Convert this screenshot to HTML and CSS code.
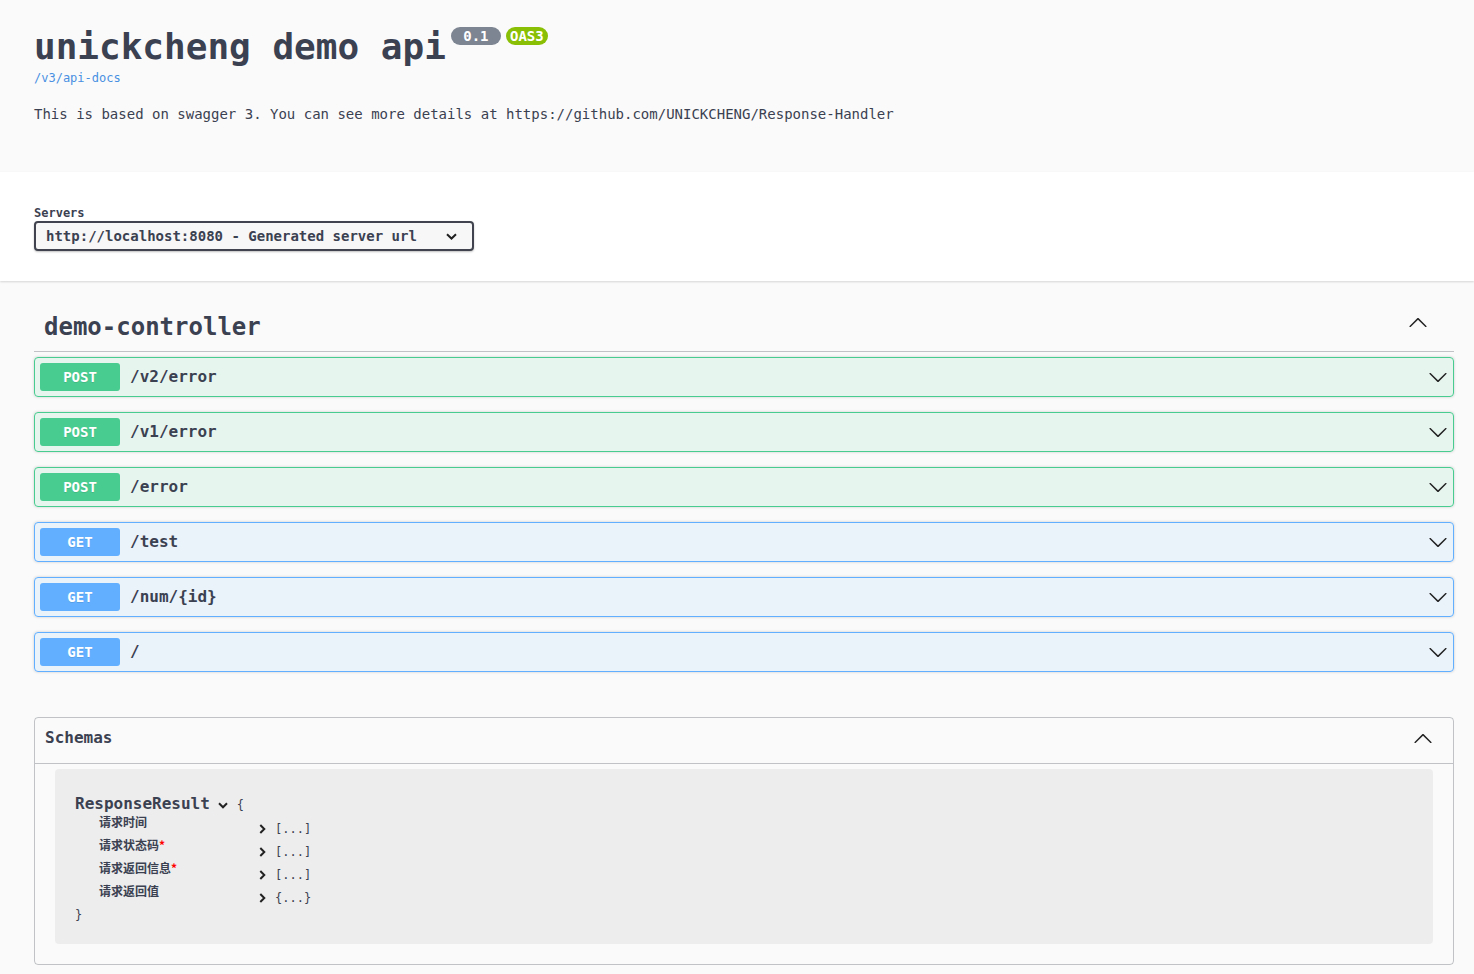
FILE: index.html
```html
<!DOCTYPE html>
<html lang="en">
<head>
<meta charset="utf-8">
<title>unickcheng demo api</title>
<link rel="stylesheet" href="styles.css">
</head>
<body>
<div class="wrap">
  <div class="info">
    <h2 class="title">unickcheng demo api<span class="badges"><span class="badge version"> 0.1 </span><span class="badge oas">OAS3</span></span></h2>
    <a class="url" href="#">/v3/api-docs</a>
    <p class="desc">This is based on swagger 3. You can see more details at https://github.com/UNICKCHENG/Response-Handler</p>
  </div>
</div>

<div class="schemes">
  <div class="wrap">
    <div class="schemes-title">Servers</div>
    <div class="select">
      <span>http://localhost:8080 - Generated server url</span>
      <svg class="select-arrow" width="11" height="7" viewBox="0 0 11 7"><path d="M1 1.2 L5.5 5.5 L10 1.2" fill="none" stroke="#202020" stroke-width="2"/></svg>
    </div>
  </div>
</div>

<div class="wrap">
  <div class="tag-section">
    <div class="tag">
      <h3>demo-controller</h3>
      <svg class="arrow" width="20" height="20" viewBox="0 0 20 20"><path transform="rotate(180 10 10)" d="M17.418 6.109c.272-.268.709-.268.979 0s.271.701 0 .969l-7.908 7.83c-.27.268-.707.268-.979 0l-7.908-7.83c-.27-.268-.27-.701 0-.969.271-.268.709-.268.979 0L10 13.25l7.418-7.141z"/></svg>
    </div>

    <div class="opblock post">
      <div class="summary"><span class="method">POST</span><span class="path">/v2/error</span>
        <svg class="arrow" width="20" height="20" viewBox="0 0 20 20"><path d="M17.418 6.109c.272-.268.709-.268.979 0s.271.701 0 .969l-7.908 7.83c-.27.268-.707.268-.979 0l-7.908-7.83c-.27-.268-.27-.701 0-.969.271-.268.709-.268.979 0L10 13.25l7.418-7.141z"/></svg>
      </div>
    </div>
    <div class="opblock post">
      <div class="summary"><span class="method">POST</span><span class="path">/v1/error</span>
        <svg class="arrow" width="20" height="20" viewBox="0 0 20 20"><path d="M17.418 6.109c.272-.268.709-.268.979 0s.271.701 0 .969l-7.908 7.83c-.27.268-.707.268-.979 0l-7.908-7.83c-.27-.268-.27-.701 0-.969.271-.268.709-.268.979 0L10 13.25l7.418-7.141z"/></svg>
      </div>
    </div>
    <div class="opblock post">
      <div class="summary"><span class="method">POST</span><span class="path">/error</span>
        <svg class="arrow" width="20" height="20" viewBox="0 0 20 20"><path d="M17.418 6.109c.272-.268.709-.268.979 0s.271.701 0 .969l-7.908 7.83c-.27.268-.707.268-.979 0l-7.908-7.83c-.27-.268-.27-.701 0-.969.271-.268.709-.268.979 0L10 13.25l7.418-7.141z"/></svg>
      </div>
    </div>
    <div class="opblock get">
      <div class="summary"><span class="method">GET</span><span class="path">/test</span>
        <svg class="arrow" width="20" height="20" viewBox="0 0 20 20"><path d="M17.418 6.109c.272-.268.709-.268.979 0s.271.701 0 .969l-7.908 7.83c-.27.268-.707.268-.979 0l-7.908-7.83c-.27-.268-.27-.701 0-.969.271-.268.709-.268.979 0L10 13.25l7.418-7.141z"/></svg>
      </div>
    </div>
    <div class="opblock get">
      <div class="summary"><span class="method">GET</span><span class="path">/num/{id}</span>
        <svg class="arrow" width="20" height="20" viewBox="0 0 20 20"><path d="M17.418 6.109c.272-.268.709-.268.979 0s.271.701 0 .969l-7.908 7.83c-.27.268-.707.268-.979 0l-7.908-7.83c-.27-.268-.27-.701 0-.969.271-.268.709-.268.979 0L10 13.25l7.418-7.141z"/></svg>
      </div>
    </div>
    <div class="opblock get">
      <div class="summary"><span class="method">GET</span><span class="path">/</span>
        <svg class="arrow" width="20" height="20" viewBox="0 0 20 20"><path d="M17.418 6.109c.272-.268.709-.268.979 0s.271.701 0 .969l-7.908 7.83c-.27.268-.707.268-.979 0l-7.908-7.83c-.27-.268-.27-.701 0-.969.271-.268.709-.268.979 0L10 13.25l7.418-7.141z"/></svg>
      </div>
    </div>
  </div>

  <section class="models">
    <div class="models-head">
      <h4>Schemas</h4>
      <svg class="arrow models-arrow" width="20" height="20" viewBox="0 0 20 20"><path transform="rotate(180 10 10)" d="M17.418 6.109c.272-.268.709-.268.979 0s.271.701 0 .969l-7.908 7.83c-.27.268-.707.268-.979 0l-7.908-7.83c-.27-.268-.27-.701 0-.969.271-.268.709-.268.979 0L10 13.25l7.418-7.141z"/></svg>
    </div>
    <div class="model-container">
      <div class="model-title"><span class="model-name">ResponseResult</span><svg class="toggle-down" width="10" height="7" viewBox="0 0 10 7"><path d="M1 1.3 L5 5.3 L9 1.3" fill="none" stroke="#222" stroke-width="2"/></svg><span class="brace">{</span></div>
      <div class="prop-row">
        <div class="prop-name">请求时间</div>
        <div class="prop-val"><svg class="toggle-right" width="7" height="10" viewBox="0 0 7 10"><path d="M1.3 1 L5.3 5 L1.3 9" fill="none" stroke="#222" stroke-width="2"/></svg><span class="collapsed">[...]</span></div>
      </div>
      <div class="prop-row">
        <div class="prop-name">请求状态码<span class="star">*</span></div>
        <div class="prop-val"><svg class="toggle-right" width="7" height="10" viewBox="0 0 7 10"><path d="M1.3 1 L5.3 5 L1.3 9" fill="none" stroke="#222" stroke-width="2"/></svg><span class="collapsed">[...]</span></div>
      </div>
      <div class="prop-row">
        <div class="prop-name">请求返回信息<span class="star">*</span></div>
        <div class="prop-val"><svg class="toggle-right" width="7" height="10" viewBox="0 0 7 10"><path d="M1.3 1 L5.3 5 L1.3 9" fill="none" stroke="#222" stroke-width="2"/></svg><span class="collapsed">[...]</span></div>
      </div>
      <div class="prop-row">
        <div class="prop-name">请求返回值</div>
        <div class="prop-val"><svg class="toggle-right" width="7" height="10" viewBox="0 0 7 10"><path d="M1.3 1 L5.3 5 L1.3 9" fill="none" stroke="#222" stroke-width="2"/></svg><span class="collapsed">{...}</span></div>
      </div>
      <div class="brace-close">}</div>
    </div>
  </section>
</div>
</body>
</html>
```
FILE: styles.css
```css
* { box-sizing: border-box; }
html, body { margin: 0; padding: 0; }
body {
  background: #fafafa;
  color: #3b4151;
  font-family: "DejaVu Sans Mono", "Noto Sans CJK SC", monospace;
}
.wrap { padding: 0 20px 0 34px; }

/* info */
.info { padding: 26px 0 50px; }
.title {
  margin: 0;
  display: flex;
  align-items: flex-start;
  font-size: 36px;
  line-height: 42px;
  font-weight: bold;
  color: #3b4151;
}
.badges { display: flex; gap: 5px; margin-left: 5px; margin-top: 1px; }
.badge {
  font-size: 14px;
  font-weight: bold;
  line-height: 18px;
  padding: 0 4px;
  border-radius: 57px;
  color: #fff;
  white-space: pre;
}
.badge.version { background: #7d8492; }
.badge.oas { background: #89bf04; }
.url {
  display: block;
  margin-top: 3px;
  font-size: 12px;
  line-height: 14px;
  color: #4990e2;
  text-decoration: none;
}
.desc { margin: 21px 0 0; font-size: 14px; line-height: 16px; }

/* servers */
.schemes {
  background: #fff;
  box-shadow: 0 1px 2px 0 rgba(0, 0, 0, .15);
  padding: 34px 0 30px;
}
.schemes-title { font-size: 12px; font-weight: bold; line-height: 14px; margin-bottom: 1px; }
.select {
  width: 440px;
  height: 30px;
  display: flex;
  align-items: center;
  justify-content: space-between;
  border: 2px solid #41444e;
  border-radius: 4px;
  background: #f7f7f7;
  box-shadow: 0 1px 2px 0 rgba(0, 0, 0, .25);
  padding: 0 15px 0 10px;
  font-size: 14px;
  font-weight: bold;
  line-height: 16px;
}
.select-arrow { display: block; }

/* operations */
.tag-section { margin-top: 20px; display: flow-root; }
.tag {
  display: flex;
  justify-content: space-between;
  align-items: flex-start;
  padding: 12px 26px 10px 10px;
  border-bottom: 1px solid rgba(59, 65, 81, .3);
  margin-bottom: 5px;
}
.tag h3 { margin: 0; font-size: 24px; line-height: 28px; font-weight: bold; }
.arrow { display: block; flex: none; fill: #222; }
.opblock {
  border: 1px solid;
  border-radius: 4px;
  box-shadow: 0 0 3px rgba(0, 0, 0, .19);
  margin-bottom: 15px;
}
.summary { display: flex; align-items: center; padding: 5px; }
.method {
  min-width: 80px;
  padding: 6px 0;
  line-height: 16px;
  border-radius: 3px;
  text-align: center;
  color: #fff;
  font-size: 14px;
  font-weight: bold;
  text-shadow: 0 1px 0 rgba(0, 0, 0, .1);
}
.path { flex: 1; padding: 0 10px; font-size: 16px; font-weight: bold; line-height: 20px; }
.post { background: rgba(73, 204, 144, .1); border-color: #49cc90; }
.post .method { background: #49cc90; }
.get { background: rgba(97, 175, 254, .1); border-color: #61affe; }
.get .method { background: #61affe; }

/* schemas */
.models {
  margin: 30px 0;
  border: 1px solid rgba(59, 65, 81, .3);
  border-radius: 4px;
}
.models-head {
  display: flex;
  justify-content: space-between;
  align-items: flex-start;
  height: 46px;
  padding: 10px 20px 0 10px;
  border-bottom: 1px solid rgba(59, 65, 81, .3);
}
.models-head h4 { margin: 0; font-size: 16px; line-height: 19px; font-weight: bold; }
.models-arrow { margin-top: 1px; }
.model-container {
  margin: 5px 20px 20px;
  background: rgba(0, 0, 0, .05);
  border-radius: 4px;
  padding: 25px 20px 20px;
}
.model-title {
  display: flex;
  align-items: baseline;
  height: 19px;
  white-space: nowrap;
}
.model-name { font-size: 16px; font-weight: bold; line-height: 19px; }
.toggle-down { align-self: flex-start; margin: 8px 0 0 8px; }
.brace { font-size: 12px; line-height: 19px; margin-left: 9px; }
.prop-row { display: flex; height: 23px; }
.prop-name {
  width: 184px;
  padding-left: 24px;
  font-family: "Noto Sans CJK SC", sans-serif;
  font-size: 12px;
  font-weight: 600;
  line-height: 15px;
  height: 15px;
  margin-top: 1px;
  color: #3b4151;
}
.star { color: red; }
.prop-val { display: flex; align-items: center; height: 16px; margin-top: 8px; }
.toggle-right { display: block; }
.collapsed { margin-left: 9px; font-size: 12px; line-height: 16px; color: #3b4151; }
.brace-close { font-size: 12px; line-height: 18px; margin-top: 1px; }
```
